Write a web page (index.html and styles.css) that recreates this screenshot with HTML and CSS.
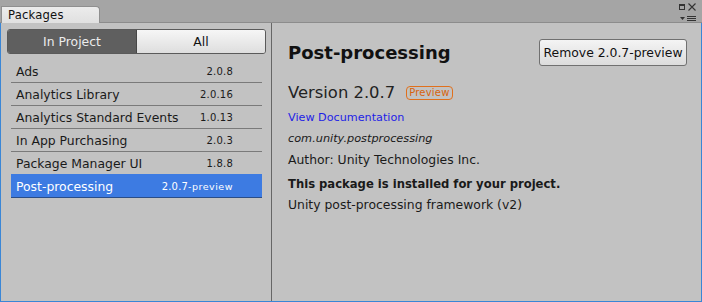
FILE: index.html
```html
<!DOCTYPE html>
<html lang="en">
<head>
  <meta charset="UTF-8" />
  <title>Packages</title>
  <link rel="stylesheet" href="styles.css">
</head>
<body>
  <div class="window">
    <div class="tabbar">
      <div class="tab">Packages</div>
      <div class="win-icons">
        <div class="icon-row">
          <span class="max-box"></span>
          <svg class="close" width="8" height="8" viewBox="0 0 8 8"><path d="M0.5 0.5 L7.5 7.5 M7.5 0.5 L0.5 7.5" stroke="#333" stroke-width="1.1" fill="none"/></svg>
        </div>
        <div class="icon-row">
          <svg width="16" height="6" viewBox="0 0 16 6"><path d="M0 1 L5 1 L2.5 4 Z" fill="#333"/><path d="M7 0.5 H16 M7 2.5 H16 M7 4.5 H16" stroke="#333" stroke-width="1"/></svg>
        </div>
      </div>
    </div>

    <div class="main">
      <div class="left">
        <div class="segmented">
          <div class="seg seg-on">In Project</div>
          <div class="seg">All</div>
        </div>
        <ul class="packages">
          <li><span class="name">Ads</span><span class="ver">2.0.8</span></li>
          <li><span class="name">Analytics Library</span><span class="ver">2.0.16</span></li>
          <li><span class="name">Analytics Standard Events</span><span class="ver">1.0.13</span></li>
          <li><span class="name">In App Purchasing</span><span class="ver">2.0.3</span></li>
          <li><span class="name">Package Manager UI</span><span class="ver">1.8.8</span></li>
          <li class="selected"><span class="name">Post-processing</span><span class="ver">2.0.7<small>-preview</small></span></li>
        </ul>
      </div>

      <div class="details">
        <div class="header">
          <h1>Post-processing</h1>
          <button>Remove 2.0.7-preview</button>
        </div>
        <div class="version">Version 2.0.7 <span class="badge">Preview</span></div>
        <p class="doc"><a href="#">View Documentation</a></p>
        <p class="pkg-id">com.unity.postprocessing</p>
        <p class="author">Author: Unity Technologies Inc.</p>
        <p class="installed">This package is installed for your project.</p>
        <p class="desc">Unity post-processing framework (v2)</p>
      </div>
    </div>
  </div>
</body>
</html>
```

FILE: styles.css
```css
body {
  margin: 0;
  font-family: "DejaVu Sans", Verdana, sans-serif;
  font-size: 12px;
  color: #1a1a1a;
}
.window {
  width: 702px;
  height: 302px;
  display: flex;
  flex-direction: column;
  background: #c2c2c2;
}
.tabbar {
  height: 22px;
  background: #a5a5a5;
  border-bottom: 1px solid #8c8c8c;
  display: flex;
  align-items: flex-end;
  position: relative;
}
.tab {
  margin-left: 1px;
  margin-bottom: -1px;
  width: 91px;
  height: 16px;
  background: linear-gradient(#ececec, #e0e0e0);
  border: 1px solid #8f8f8f;
  border-bottom: none;
  border-top-right-radius: 4px;
  padding-left: 6px;
  font-size: 11.6px;
  line-height: 17px;
  letter-spacing: 0.2px;
  color: #111;
}
.win-icons {
  position: absolute;
  right: 6px;
  top: 3px;
  display: flex;
  flex-direction: column;
  align-items: flex-end;
  gap: 4px;
}
.icon-row {
  display: flex;
  align-items: center;
  gap: 3px;
  height: 8px;
}
.max-box {
  width: 4px;
  height: 3px;
  border: 1px solid #333;
  border-top-width: 2px;
}
.main {
  flex: 1;
  display: flex;
  border: 1px solid #3a86d6;
  border-top: none;
  min-height: 0;
}
.left {
  width: 270px;
  border-right: 1px solid #666;
  padding-top: 6px;
}
.segmented {
  display: flex;
  margin-left: 6px;
  width: 259px;
  height: 25px;
  box-sizing: border-box;
  border: 1px solid #5a5a5a;
  border-radius: 3px;
  overflow: hidden;
}
.seg {
  flex: 1;
  text-align: center;
  line-height: 23px;
  font-size: 12.4px;
  background: linear-gradient(#f6f6f6, #dedede);
  color: #111;
}
.seg-on {
  background: #5f5f5f;
  color: #ececec;
  border-right: 1px solid #474747;
}
.packages {
  list-style: none;
  margin: 6px 0 0 10px;
  padding: 0;
  width: 251px;
}
.packages li {
  display: flex;
  justify-content: space-between;
  align-items: center;
  height: 22px;
  border-bottom: 1px solid #7a7a7a;
  padding: 0 29px 0 5px;
  font-size: 12.4px;
}
.packages li.selected {
  background: #3d7be2;
  color: #fff;
  border-bottom-color: #2b4d86;
  margin-top: -1px;
  border-top: 1px solid #3d7be2;
}
.ver {
  font-size: 10px;
  letter-spacing: 0.2px;
}
.ver small {
  font-size: 9.5px;
  letter-spacing: 0.5px;
}
.details {
  flex: 1;
  padding: 16px 14px 0 16px;
}
.header {
  display: flex;
  justify-content: space-between;
  align-items: center;
  height: 27px;
}
h1 {
  margin: 0;
  font-size: 18px;
  font-weight: bold;
  color: #111;
}
button {
  font-family: "DejaVu Sans", Verdana, sans-serif;
  font-size: 12.4px;
  height: 27px;
  width: 148px;
  padding: 0;
  color: #111;
  background: linear-gradient(#f4f4f4, #dcdcdc);
  border: 1px solid #707070;
  border-radius: 3px;
}
.version {
  margin-top: 17px;
  font-size: 16.4px;
  line-height: 20px;
  color: #222;
  display: flex;
  align-items: center;
  gap: 11px;
}
.badge {
  font-size: 10px;
  line-height: 12px;
  color: #d8620e;
  border: 1px solid #e0701c;
  border-radius: 4px;
  padding: 0 2px;
  letter-spacing: 0.2px;
}
p {
  margin: 0;
  line-height: 20px;
  font-size: 12.4px;
}
.doc {
  margin-top: 5px;
  font-size: 11.2px;
}
.doc a {
  color: #1e1ee6;
  text-decoration: none;
}
.pkg-id {
  font-style: italic;
  font-size: 11.3px;
  margin-top: 1px;
}
.author {
  margin-top: 1px;
}
.installed {
  margin-top: 4px;
  font-weight: bold;
  font-size: 11.6px;
}
.desc {
  margin-top: 1px;
}
```
